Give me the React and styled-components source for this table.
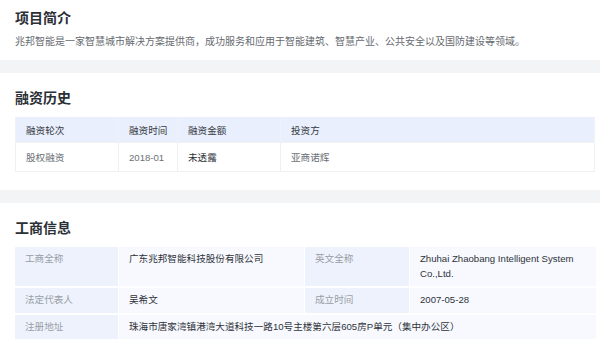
import React from "react";
import styled, { createGlobalStyle } from "styled-components";

const GlobalStyle = createGlobalStyle`
  html, body {
    margin: 0;
    padding: 0;
    background: #ffffff;
  }
  body {
    width: 600px;
    font-family: "Liberation Sans", "Noto Sans CJK SC", sans-serif;
    color: #333333;
  }
`;

const financing = [
  { round: "股权融资", date: "2018-01", amount: "未透露", investor: "亚商诺辉" },
];

export default function App() {
  return (
    <Page>
      <GlobalStyle />
      <Section $top={8} $bottom={10}>
        <Title>项目简介</Title>
        <Intro>
          兆邦智能是一家智慧城市解决方案提供商，成功服务和应用于智能建筑、智慧产业、公共安全以及国防建设等领域。
        </Intro>
      </Section>
      <Band />
      <Section $top={15} $bottom={18}>
        <Title>融资历史</Title>
        <FinanceTable>
          <colgroup>
            <col style={{ width: 103 }} />
            <col style={{ width: 59 }} />
            <col style={{ width: 103 }} />
            <col />
          </colgroup>
          <thead>
            <tr>
              <Th>融资轮次</Th>
              <Th>融资时间</Th>
              <Th>融资金额</Th>
              <Th>投资方</Th>
            </tr>
          </thead>
          <tbody>
            {financing.map((row) => (
              <tr key={row.date}>
                <Td>{row.round}</Td>
                <Td>{row.date}</Td>
                <Td $dark>{row.amount}</Td>
                <Td>{row.investor}</Td>
              </tr>
            ))}
          </tbody>
        </FinanceTable>
      </Section>
      <Band />
      <Section $top={15} $bottom={13}>
        <Title>工商信息</Title>
        <InfoGrid>
          <Label>工商全称</Label>
          <Value>广东兆邦智能科技股份有限公司</Value>
          <Label>英文全称</Label>
          <Value>Zhuhai Zhaobang Intelligent System Co.,Ltd.</Value>
          <Label>法定代表人</Label>
          <Value>吴希文</Value>
          <Label>成立时间</Label>
          <Value>2007-05-28</Value>
          <Label>注册地址</Label>
          <Value $span={3}>珠海市唐家湾镇港湾大道科技一路10号主楼第六层605房P单元（集中办公区）</Value>
        </InfoGrid>
      </Section>
    </Page>
  );
}

const Page = styled.div`
  width: 600px;
  height: 352px;
  overflow: hidden;
`;

const Section = styled.section`
  padding: ${({ $top }) => $top}px 5px ${({ $bottom }) => $bottom}px 15px;
`;

const Title = styled.h2`
  margin: 0;
  font-size: 14px;
  line-height: 20px;
  font-weight: 700;
  color: #2b2f36;
`;

const Intro = styled.p`
  margin: 6px 0 0;
  font-size: 10px;
  line-height: 16px;
  color: #666a70;
`;

const Band = styled.div`
  height: 13px;
  background: #f3f4f6;
`;

const FinanceTable = styled.table`
  width: 580px;
  margin-top: 9px;
  border-collapse: collapse;
  table-layout: fixed;
  font-size: 9.6px;
  white-space: nowrap;
`;

const Th = styled.th`
  height: 25px;
  padding: 0 10px;
  text-align: left;
  font-weight: 400;
  color: #333740;
  background: #e9effc;
  border: 1px solid #f0f2f6;
  border-top: none;
`;

const Td = styled.td`
  height: 28px;
  padding: 0 10px;
  color: ${({ $dark }) => ($dark ? "#2b2f36" : "#6b6f76")};
  border: 1px solid #eef0f3;
`;

const InfoGrid = styled.div`
  width: 580px;
  margin-top: 9px;
  display: grid;
  grid-template-columns: 103px 185px 104px 186px;
  column-gap: 1px;
  row-gap: 2px;
  font-size: 9.6px;
  line-height: 14.5px;
`;

const Label = styled.div`
  padding: 5px 10px;
  background: #edf2fc;
  color: #9a9ea6;
`;

const Value = styled.div`
  padding: 5px 10px;
  background: #f7f9fe;
  color: #2f333a;
  font-size: ${({ $span }) => ($span ? "9.6px" : "inherit")};
  grid-column: span ${({ $span }) => $span || 1};
`;
